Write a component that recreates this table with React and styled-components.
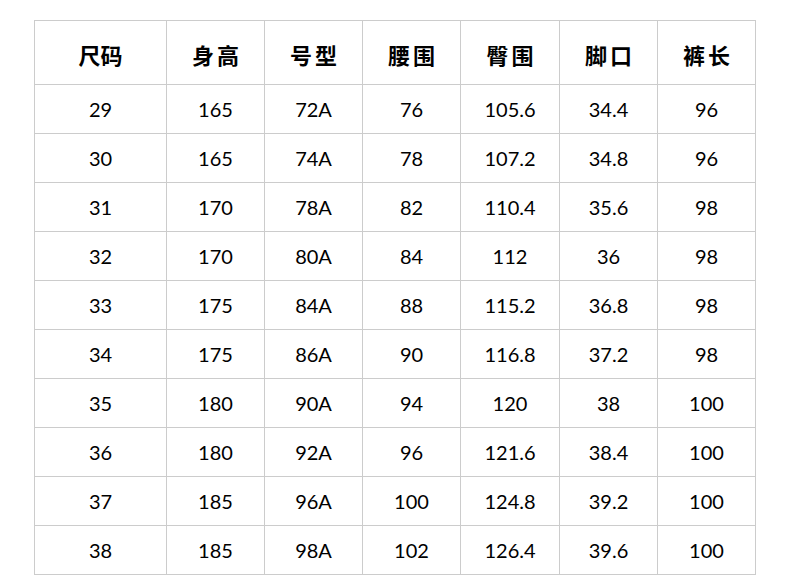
import React from "react";
import styled, { createGlobalStyle } from "styled-components";

const Global = createGlobalStyle`
  html, body { margin: 0; padding: 0; background: #fff; }
  body { font-family: "Lato", "Noto Sans CJK SC", sans-serif; color: #000; }
`;

const Page = styled.div`
  padding: 20px 0 0 34px;
`;

const Table = styled.table`
  border-collapse: collapse;
  table-layout: fixed;
  width: 721px;
`;

const Col = styled.col`
  width: ${(p) => p.$w}px;
`;

const HeadCell = styled.th`
  height: 61px;
  border: 1px solid #cccccc;
  padding: 2px 0 0 0;
  font-family: "Noto Sans CJK SC", sans-serif;
  font-weight: 700;
  font-size: 22px;
  letter-spacing: ${(p) => (p.$spaced ? "3px" : "0")};
  text-indent: ${(p) => (p.$spaced ? "3px" : "0")};
  text-align: center;
  vertical-align: middle;
`;

const Cell = styled.td`
  height: 48px;
  border: 1px solid #cccccc;
  padding: 0;
  font-family: "Lato", sans-serif;
  font-size: 20px;
  text-align: center;
  vertical-align: middle;
`;

const headers = [
  ["尺码", false],
  ["身高", true],
  ["号型", true],
  ["腰围", true],
  ["臀围", true],
  ["脚口", true],
  ["裤长", true],
];

const rows = [
  ["29", "165", "72A", "76", "105.6", "34.4", "96"],
  ["30", "165", "74A", "78", "107.2", "34.8", "96"],
  ["31", "170", "78A", "82", "110.4", "35.6", "98"],
  ["32", "170", "80A", "84", "112", "36", "98"],
  ["33", "175", "84A", "88", "115.2", "36.8", "98"],
  ["34", "175", "86A", "90", "116.8", "37.2", "98"],
  ["35", "180", "90A", "94", "120", "38", "100"],
  ["36", "180", "92A", "96", "121.6", "38.4", "100"],
  ["37", "185", "96A", "100", "124.8", "39.2", "100"],
  ["38", "185", "98A", "102", "126.4", "39.6", "100"],
];

const widths = [132, 98, 98, 98, 99, 98, 98];

export default function App() {
  return (
    <Page>
      <Global />
      <Table>
        <colgroup>
          {widths.map((w, i) => (
            <Col key={i} $w={w} />
          ))}
        </colgroup>
        <thead>
          <tr>
            {headers.map(([t, s]) => (
              <HeadCell key={t} $spaced={s}>
                {t}
              </HeadCell>
            ))}
          </tr>
        </thead>
        <tbody>
          {rows.map((r) => (
            <tr key={r[0]}>
              {r.map((v, i) => (
                <Cell key={i}>{v}</Cell>
              ))}
            </tr>
          ))}
        </tbody>
      </Table>
    </Page>
  );
}
